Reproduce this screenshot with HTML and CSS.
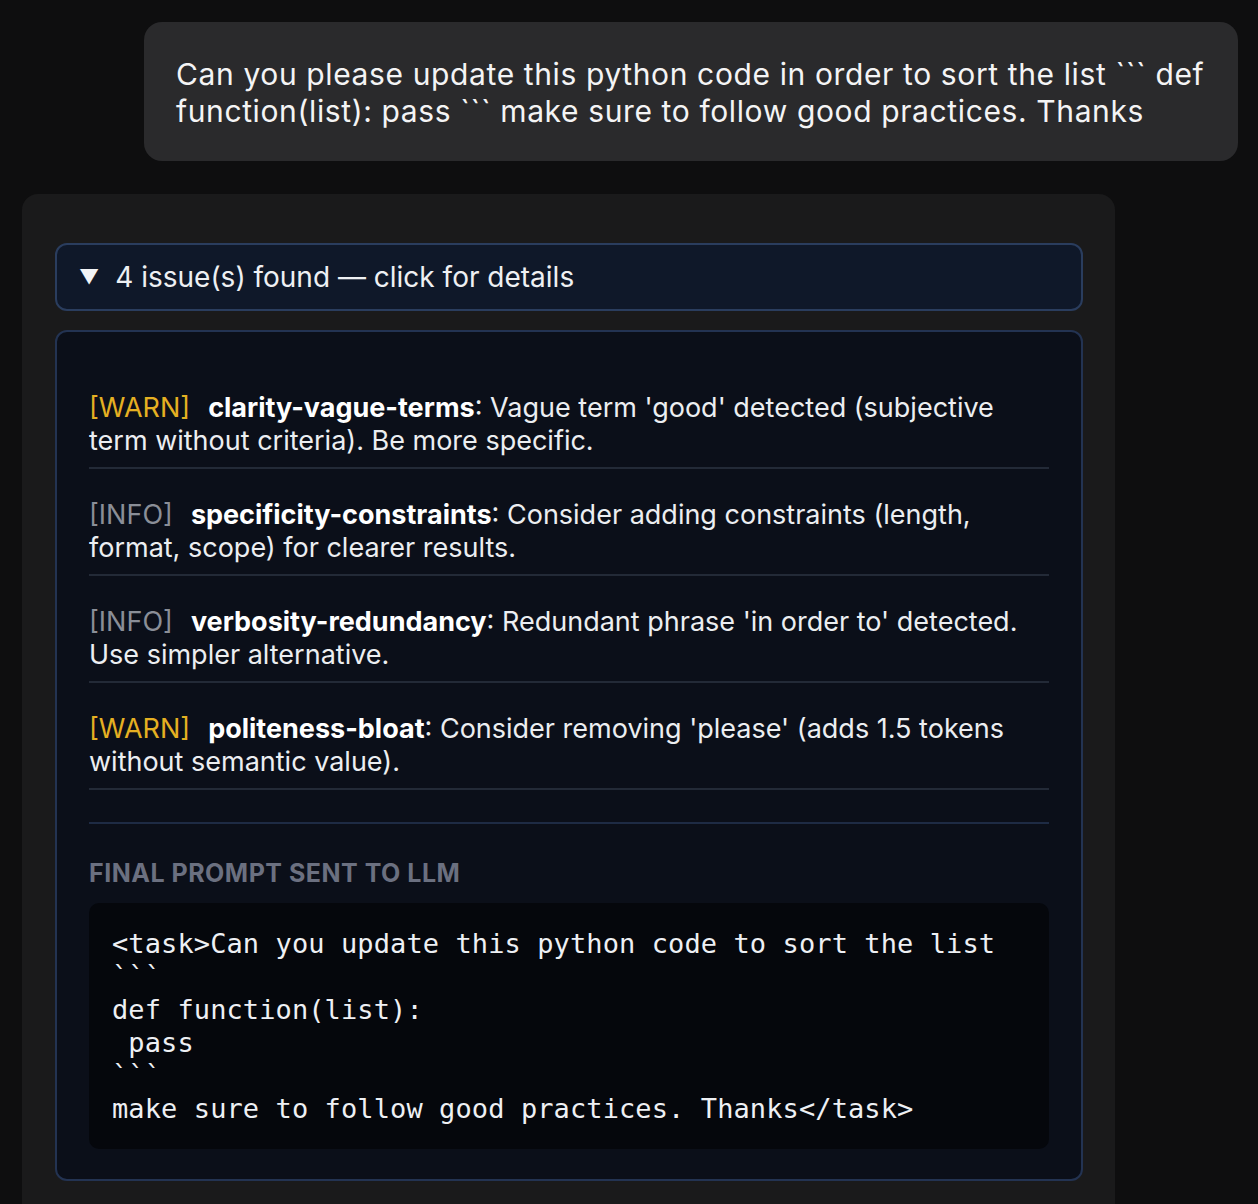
FILE: index.html
```html
<!DOCTYPE html>
<html lang="en">
<head>
<meta charset="utf-8">
<title>Chat</title>
<link rel="stylesheet" href="styles.css">
</head>
<body>
<div class="chat">
  <div class="user-row">
    <div class="user-bubble">Can you please update this python code in order to sort the list &#96;&#96;&#96; def function(list): pass &#96;&#96;&#96; make sure to follow good practices. Thanks</div>
  </div>
  <div class="assistant-card">
    <details class="issues" open>
      <summary class="issues-summary"><span class="caret">▼</span><span>4 issue(s) found — click for details</span></summary>
    </details>
    <div class="issues-body">
      <ul class="issue-list">
        <li class="issue"><span class="tag warn">[WARN]</span><strong class="rule">clarity-vague-terms</strong>: Vague term 'good' detected (subjective term without criteria). Be more specific.</li>
        <li class="issue"><span class="tag info">[INFO]</span><strong class="rule">specificity-constraints</strong>: Consider adding constraints (length, format, scope) for clearer results.</li>
        <li class="issue"><span class="tag info">[INFO]</span><strong class="rule">verbosity-redundancy</strong>: Redundant phrase 'in order to' detected. Use simpler alternative.</li>
        <li class="issue"><span class="tag warn">[WARN]</span><strong class="rule">politeness-bloat</strong>: Consider removing 'please' (adds 1.5 tokens without semantic value).</li>
      </ul>
      <hr class="section-rule">
      <div class="final-label">FINAL PROMPT SENT TO LLM</div>
      <pre class="final-code">&lt;task&gt;Can you update this python code to sort the list
&#96;&#96;&#96;
def function(list):
 pass
&#96;&#96;&#96;
make sure to follow good practices. Thanks&lt;/task&gt;</pre>
    </div>
  </div>
</div>
</body>
</html>
```
FILE: styles.css
```css
html, body {
  margin: 0;
  padding: 0;
  background: #0e0e0f;
}
body {
  font-family: Inter, "Noto Sans", "Liberation Sans", sans-serif;
  color: #f2f2f2;
}
.chat {
  padding: 22px 20px 0 22px;
  display: flex;
  flex-direction: column;
  gap: 33px;
}
.user-row {
  display: flex;
  justify-content: flex-end;
}
.user-bubble {
  width: 1094px;
  box-sizing: border-box;
  background: #2a2a2c;
  border-radius: 18px;
  padding: 34px 28px 31px 32px;
  font-size: 30px;
  line-height: 37px;
  color: #f4f4f5;
  letter-spacing: 0.62px;
}
.assistant-card {
  width: 1093px;
  box-sizing: border-box;
  background: #1a1a1b;
  border-radius: 16px;
  padding: 49px 32px 40px 33px;
  display: flex;
  flex-direction: column;
  gap: 19px;
}
.issues {
  margin: 0;
}
.issues-summary {
  list-style: none;
  display: flex;
  align-items: center;
  gap: 16px;
  height: 64px;
  box-sizing: content-box;
  padding: 0 22px;
  background: #0f1829;
  border: 2px solid #2a3d5e;
  border-radius: 12px;
  font-size: 28px;
  color: #eef0f3;
}
.issues-summary::-webkit-details-marker { display: none; }
.caret {
  font-size: 20px;
  color: #f2f4f7;
}
.issues-body {
  background: #0b0f19;
  border: 2px solid #233352;
  border-radius: 12px;
  padding: 59px 32px 30px 32px;
}
.issue-list {
  list-style: none;
  margin: 0;
  padding: 0;
  display: flex;
  flex-direction: column;
  gap: 29px;
}
.issue {
  font-size: 27px;
  line-height: 33px;
  color: #eceef1;
  padding-bottom: 10px;
  border-bottom: 2px solid #232a37;
  letter-spacing: 0;
}
.tag {
  margin-right: 18px;
}
.tag.warn { color: #e5b022; }
.tag.info { color: #8a8e97; }
.rule {
  font-weight: 700;
  color: #ffffff;
}
.section-rule {
  border: 0;
  border-top: 2px solid #1e2b44;
  margin: 32px 0 0 0;
}
.final-label {
  margin-top: 35px;
  font-size: 25px;
  line-height: 28px;
  font-weight: 700;
  color: #6b7080;
  letter-spacing: 0.5px;
}
.final-code {
  margin: 16px 0 0 0;
  background: #05070c;
  border-radius: 10px;
  padding: 24px 23px 24px 23px;
  font-family: "DejaVu Sans Mono", "Liberation Mono", monospace;
  font-size: 27px;
  line-height: 33px;
  letter-spacing: 0.1px;
  color: #eef0f4;
  white-space: pre-wrap;
}
```
